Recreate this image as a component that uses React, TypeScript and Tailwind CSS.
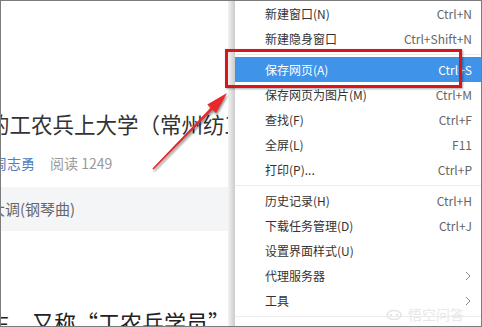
import React from "react";

const cjk = { fontFamily: '"Noto Sans CJK SC", "Noto Sans", sans-serif' };

type Item = { label: string; shortcut?: string; sub?: boolean; active?: boolean };

const groups: Item[][] = [
  [
    { label: "新建窗口(N)", shortcut: "Ctrl+N" },
    { label: "新建隐身窗口", shortcut: "Ctrl+Shift+N" },
  ],
  [
    { label: "保存网页(A)", shortcut: "Ctrl+S", active: true },
    { label: "保存网页为图片(M)", shortcut: "Ctrl+M" },
    { label: "查找(F)", shortcut: "Ctrl+F" },
    { label: "全屏(L)", shortcut: "F11" },
    { label: "打印(P)...", shortcut: "Ctrl+P" },
  ],
  [
    { label: "历史记录(H)", shortcut: "Ctrl+H" },
    { label: "下载任务管理(D)", shortcut: "Ctrl+J" },
    { label: "设置界面样式(U)" },
    { label: "代理服务器", sub: true },
    { label: "工具", sub: true },
  ],
  [{ label: "帮助" }],
];

function Row({ it }: { it: Item }) {
  return (
    <div
      className={
        "h-[25px] shrink-0 flex items-center pl-[30px] pr-[9px] text-[12px] " +
        (it.active ? "bg-[#3f93e8] text-white" : "text-[#333]")
      }
    >
      <span className="flex-1 whitespace-nowrap">{it.label}</span>
      {it.shortcut && (
        <span className={it.active ? "text-white" : "text-[#666]"}>{it.shortcut}</span>
      )}
      {it.sub && (
        <svg width="6" height="10" viewBox="0 0 6 10" className="mr-[1px]">
          <path d="M1 1 L5 5 L1 9" fill="none" stroke="#8a8a8a" strokeWidth="1" />
        </svg>
      )}
    </div>
  );
}

export default function App() {
  return (
    <div
      className="relative w-[482px] h-[327px] overflow-hidden border border-[#7c7c7c] bg-white flex"
      style={cjk}
    >
      {/* left page content */}
      <div className="w-[227px] shrink-0 overflow-hidden flex flex-col pt-[110px]">
        <div className="shrink-0 text-[21.5px] leading-[26px] whitespace-nowrap text-[#333] -ml-[13px]">
          的工农兵上大学（常州纺工学院）
        </div>
        <div className="shrink-0 mt-[16px] text-[14px] leading-[20px] whitespace-nowrap -ml-[8px] flex">
          <span className="text-[#4f7fbf]">周志勇</span>
          <span className="ml-[15px] text-[#9a9a9a]">阅读 1249</span>
        </div>
        <div className="shrink-0 mt-[14px] h-[44px] bg-[#f4f5f7] flex items-center text-[15px] text-[#666] whitespace-nowrap">
          <span className="-ml-[11px]">大调(钢琴曲)</span>
        </div>
        <div className="shrink-0 mt-[79px] text-[22px] leading-[22px] whitespace-nowrap text-[#222] -ml-[13px]">
          生，又称“工农兵学员”
        </div>
      </div>

      {/* menu shadow */}
      <div className="w-[7px] shrink-0 bg-gradient-to-r from-[#f3f3f3] to-[#cbcbcb]" />

      {/* context menu */}
      <div className="flex-1 flex flex-col bg-white">
        {groups.map((g, gi) => (
          <React.Fragment key={gi}>
            {gi > 0 && (
              <div className="h-[6px] shrink-0 flex items-center">
                <div className="h-px w-full bg-[#ececec]" />
              </div>
            )}
            {g.map((it) => (
              <Row key={it.label} it={it} />
            ))}
          </React.Fragment>
        ))}
      </div>

      {/* red highlight box */}
      <div className="absolute left-[224px] top-[48px] w-[237px] h-[39px] border-[3px] border-[#d9141b] shadow-[1px_1px_2px_rgba(0,0,0,0.35)]" />

      {/* red arrow */}
      <svg
        className="absolute left-0 top-0 drop-shadow-[1px_2px_1px_rgba(0,0,0,0.45)]"
        width="482"
        height="327"
        viewBox="0 0 482 327"
      >
        <polygon
          points="151.4,167.6 152.6,168.4 211.7,108.8 215,112 226,92 206.3,103.5 209.6,106.7"
          fill="#e8282a"
        />
      </svg>

      {/* watermark */}
      <div className="absolute left-[385px] top-[304px] flex items-center gap-[6px] text-[#e8e8e8] text-[14px] leading-[18px]">
        <svg width="16" height="12" viewBox="0 0 16 12">
          <ellipse cx="8" cy="7" rx="7" ry="4.5" fill="none" stroke="#e5e5e5" strokeWidth="1.6" />
          <circle cx="5" cy="7" r="1.3" fill="#e5e5e5" />
          <circle cx="11" cy="7" r="1.3" fill="#e5e5e5" />
        </svg>
        <span>悟空问答</span>
      </div>
    </div>
  );
}
